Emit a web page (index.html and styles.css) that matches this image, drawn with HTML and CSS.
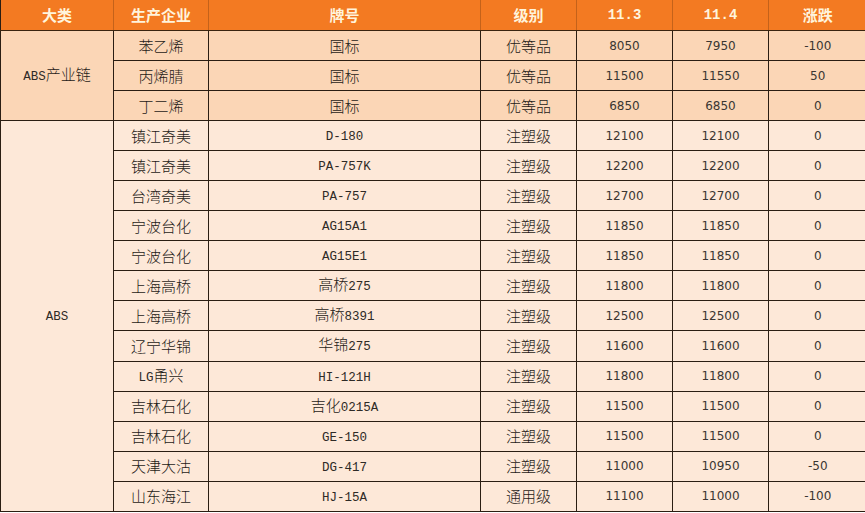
FILE: index.html
```html
<!DOCTYPE html>
<html lang="zh">
<head>
<meta charset="utf-8">
<title>ABS价格表</title>
<link rel="stylesheet" href="styles.css">
</head>
<body>
<table class="price">
  <colgroup>
    <col class="c1"><col class="c2"><col class="c3"><col class="c4"><col class="c5"><col class="c6"><col class="c7">
  </colgroup>
  <thead>
    <tr>
      <th>大类</th><th>生产企业</th><th>牌号</th><th>级别</th><th class="hnum">11.3</th><th class="hnum">11.4</th><th>涨跌</th>
    </tr>
  </thead>
  <tbody class="chain">
    <tr><td rowspan="3"><span class="en">ABS</span>产业链</td><td>苯乙烯</td><td>国标</td><td>优等品</td><td class="num">8050</td><td class="num">7950</td><td class="num">-100</td></tr>
    <tr><td>丙烯腈</td><td>国标</td><td>优等品</td><td class="num">11500</td><td class="num">11550</td><td class="num">50</td></tr>
    <tr><td>丁二烯</td><td>国标</td><td>优等品</td><td class="num">6850</td><td class="num">6850</td><td class="num">0</td></tr>
  </tbody>
  <tbody class="abs">
    <tr><td rowspan="13"><span class="en">ABS</span></td><td>镇江奇美</td><td><span class="en">D-180</span></td><td>注塑级</td><td class="num">12100</td><td class="num">12100</td><td class="num">0</td></tr>
    <tr><td>镇江奇美</td><td><span class="en">PA-757K</span></td><td>注塑级</td><td class="num">12200</td><td class="num">12200</td><td class="num">0</td></tr>
    <tr><td>台湾奇美</td><td><span class="en">PA-757</span></td><td>注塑级</td><td class="num">12700</td><td class="num">12700</td><td class="num">0</td></tr>
    <tr><td>宁波台化</td><td><span class="en">AG15A1</span></td><td>注塑级</td><td class="num">11850</td><td class="num">11850</td><td class="num">0</td></tr>
    <tr><td>宁波台化</td><td><span class="en">AG15E1</span></td><td>注塑级</td><td class="num">11850</td><td class="num">11850</td><td class="num">0</td></tr>
    <tr><td>上海高桥</td><td>高桥<span class="en">275</span></td><td>注塑级</td><td class="num">11800</td><td class="num">11800</td><td class="num">0</td></tr>
    <tr><td>上海高桥</td><td>高桥<span class="en">8391</span></td><td>注塑级</td><td class="num">12500</td><td class="num">12500</td><td class="num">0</td></tr>
    <tr><td>辽宁华锦</td><td>华锦<span class="en">275</span></td><td>注塑级</td><td class="num">11600</td><td class="num">11600</td><td class="num">0</td></tr>
    <tr><td><span class="en">LG</span>甬兴</td><td><span class="en">HI-121H</span></td><td>注塑级</td><td class="num">11800</td><td class="num">11800</td><td class="num">0</td></tr>
    <tr><td>吉林石化</td><td>吉化<span class="en">0215A</span></td><td>注塑级</td><td class="num">11500</td><td class="num">11500</td><td class="num">0</td></tr>
    <tr><td>吉林石化</td><td><span class="en">GE-150</span></td><td>注塑级</td><td class="num">11500</td><td class="num">11500</td><td class="num">0</td></tr>
    <tr><td>天津大沽</td><td><span class="en">DG-417</span></td><td>注塑级</td><td class="num">11000</td><td class="num">10950</td><td class="num">-50</td></tr>
    <tr><td>山东海江</td><td><span class="en">HJ-15A</span></td><td>通用级</td><td class="num">11100</td><td class="num">11000</td><td class="num">-100</td></tr>
  </tbody>
</table>
</body>
</html>
```

FILE: styles.css
```css
html, body {
  margin: 0;
  padding: 0;
  background: #ffffff;
}
body {
  font-family: "Noto Sans CJK SC", "Liberation Sans", sans-serif;
  overflow: hidden;
}
.price {
  border-collapse: collapse;
  table-layout: fixed;
  width: 866px;
  margin-left: 0;
}
.c1 { width: 113px; }
.c2 { width: 95px; }
.c3 { width: 272px; }
.c4 { width: 96px; }
.c5 { width: 96px; }
.c6 { width: 96px; }
.c7 { width: 98px; }

.price th,
.price td {
  height: 29.05px;
  padding: 0;
  text-align: center;
  vertical-align: middle;
  line-height: 18px;
  font-size: 15px;
  font-weight: 300;
  border: 1px solid #2a1d12;
  color: #1e1a16;
  white-space: nowrap;
}
.price thead th {
  background: #f37a22;
  color: #fff4dc;
  font-weight: 700;
  border-top: 0;
  border-left-color: #c4621a;
  border-right-color: #c4621a;
  border-bottom: 1px solid #3a2410;
  height: 30px;
}
.price thead th:first-child { border-left-color: #2a1d12; }
.price thead .hnum {
  font-family: "Liberation Mono", monospace;
  font-size: 14px;
}
.chain td { background: #fbd6b6; }
.abs td { background: #fde8d8; }
.en {
  font-family: "Liberation Mono", monospace;
  font-size: 12.5px;
  font-weight: 400;
  color: #2e2a26;
}
.price td.num {
  font-family: "DejaVu Sans", "Liberation Sans", sans-serif;
  font-size: 12px;
  font-weight: 400;
  color: #3a3632;
}
.price td:last-child,
.price th:last-child { border-right: 0; }
```
